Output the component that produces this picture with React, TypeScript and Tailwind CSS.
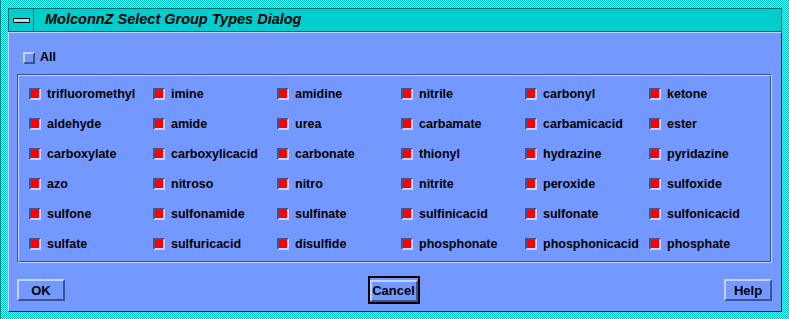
import React from "react";

const groups = [
  "trifluoromethyl", "imine", "amidine", "nitrile", "carbonyl", "ketone",
  "aldehyde", "amide", "urea", "carbamate", "carbamicacid", "ester",
  "carboxylate", "carboxylicacid", "carbonate", "thionyl", "hydrazine", "pyridazine",
  "azo", "nitroso", "nitro", "nitrite", "peroxide", "sulfoxide",
  "sulfone", "sulfonamide", "sulfinate", "sulfinicacid", "sulfonate", "sulfonicacid",
  "sulfate", "sulfuricacid", "disulfide", "phosphonate", "phosphonicacid", "phosphate",
];

function Check({ on }: { on: boolean }) {
  if (on) {
    return (
      <span className="block w-[12px] h-[12px] border-2 border-t-[#3d5290] border-l-[#3d5290] border-b-[#c4d2ff] border-r-[#c4d2ff] bg-[#ff0000]" />
    );
  }
  return (
    <span className="block w-[12px] h-[12px] border-2 border-t-[#c4d2ff] border-l-[#c4d2ff] border-b-[#3d5290] border-r-[#3d5290] bg-[#7398ff]" />
  );
}

function Btn({ label }: { label: string }) {
  return (
    <button className="w-[48px] h-[22px] border-2 border-t-[#c4d2ff] border-l-[#c4d2ff] border-b-[#3d5290] border-r-[#3d5290] bg-[#7398ff] text-[13px] font-bold text-black leading-none">
      {label}
    </button>
  );
}

export default function App() {
  return (
    <div
      className="w-[789px] h-[319px] pt-[8px] pl-[7px] pr-[7px] pb-[7px] bg-[repeating-conic-gradient(#00c4c4_0_25%,#8ae8e8_0_50%)] bg-[length:2px_2px] border-l border-[#0a8a8a] flex flex-col"
      style={{ fontFamily: '"Liberation Sans", Arial, sans-serif' }}
    >
      {/* title bar */}
      <div className="h-[24px] flex bg-[#00cdcd] border border-[#0a6f6f] border-b-[#0b5e5e]">
        <div className="w-[25px] flex items-center justify-center border-r border-[#0a6f6f]">
          <span className="block w-[17px] h-[5px] border border-black bg-[#9ee9e9]" />
        </div>
        <div className="pl-[11px] flex items-center text-[14.5px] font-bold italic text-black">
          MolconnZ Select Group Types Dialog
        </div>
      </div>

      {/* body */}
      <div className="flex-1 bg-[#7398ff] border border-[#1a2a60] border-t-[#c4d2ff] border-l-[#c4d2ff] flex flex-col pl-[8px] pr-[9px]">
        <div className="flex items-center gap-[5px] pl-[6px] mt-[18px] h-[13px]">
          <Check on={false} />
          <span className="text-[12.5px] font-bold text-black">All</span>
        </div>

        <div className="mt-[10px] border border-t-[#3d5290] border-l-[#3d5290] border-b-[#c4d2ff] border-r-[#c4d2ff]">
          <div className="border border-t-[#c4d2ff] border-l-[#c4d2ff] border-b-[#3d5290] border-r-[#3d5290] pl-[10px] pt-[3px] pb-[2px] grid grid-cols-[repeat(6,124px)]">
            {groups.map((g) => (
              <div key={g} className="h-[30px] flex items-center gap-[6px]">
                <Check on={true} />
                <span className="text-[12.5px] font-bold text-black">{g}</span>
              </div>
            ))}
          </div>
        </div>

        <div className="flex items-center justify-between mt-[13px]">
          <Btn label="OK" />
          <div className="border-2 border-black -ml-[2px]">
            <button className="w-[48px] h-[22px] border-2 border-t-[#c4d2ff] border-l-[#c4d2ff] border-b-[#3d5290] border-r-[#3d5290] bg-[#7398ff] text-[13px] font-bold text-black leading-none">
              Cancel
            </button>
          </div>
          <Btn label="Help" />
        </div>
      </div>
    </div>
  );
}
